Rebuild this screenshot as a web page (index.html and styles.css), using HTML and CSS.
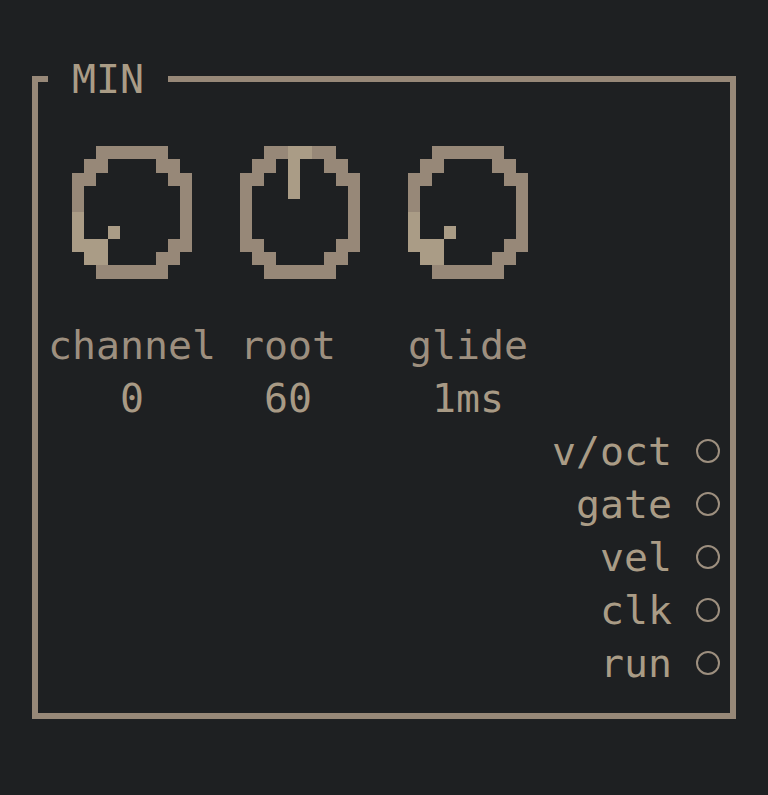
FILE: index.html
```html
<!DOCTYPE html>
<html lang="en">
<head>
<meta charset="utf-8">
<title>MIN</title>
<link rel="stylesheet" href="styles.css">
</head>
<body>
<fieldset class="panel">
  <legend class="title"> MIN </legend>
  <div class="knobs">
    <div class="knob-col">
      <svg class="knob" viewBox="0 0 10 10" preserveAspectRatio="none">
        <path class="ring" d="M2 0h6v1h-6z M1 1h2v1h-2z M7 1h2v1h-2z M0 2h2v1h-2z M8 2h2v1h-2z M0 3h1v4h-1z M9 3h1v4h-1z M0 7h2v1h-2z M8 7h2v1h-2z M1 8h2v1h-2z M7 8h2v1h-2z M2 9h6v1h-6z"/>
        <path class="hi" d="M0 5h1v3h-1z M1 7h2v2h-2z M3 6h1v1h-1z"/>
      </svg>
      <div class="label">channel</div>
      <div class="value">0</div>
    </div>
    <div class="knob-col">
      <svg class="knob" viewBox="0 0 10 10" preserveAspectRatio="none">
        <path class="ring" d="M2 0h6v1h-6z M1 1h2v1h-2z M7 1h2v1h-2z M0 2h2v1h-2z M8 2h2v1h-2z M0 3h1v4h-1z M9 3h1v4h-1z M0 7h2v1h-2z M8 7h2v1h-2z M1 8h2v1h-2z M7 8h2v1h-2z M2 9h6v1h-6z"/>
        <path class="hi" d="M4 0h2v1h-2z M4 1h1v3h-1z"/>
      </svg>
      <div class="label even">root</div>
      <div class="value even">60</div>
    </div>
    <div class="knob-col">
      <svg class="knob" viewBox="0 0 10 10" preserveAspectRatio="none">
        <path class="ring" d="M2 0h6v1h-6z M1 1h2v1h-2z M7 1h2v1h-2z M0 2h2v1h-2z M8 2h2v1h-2z M0 3h1v4h-1z M9 3h1v4h-1z M0 7h2v1h-2z M8 7h2v1h-2z M1 8h2v1h-2z M7 8h2v1h-2z M2 9h6v1h-6z"/>
        <path class="hi" d="M0 5h1v3h-1z M1 7h2v2h-2z M3 6h1v1h-1z"/>
      </svg>
      <div class="label">glide</div>
      <div class="value">1ms</div>
    </div>
  </div>
  <ul class="ports">
    <li class="port"><span class="port-name">v/oct</span><span class="jack"></span></li>
    <li class="port"><span class="port-name">gate</span><span class="jack"></span></li>
    <li class="port"><span class="port-name">vel</span><span class="jack"></span></li>
    <li class="port"><span class="port-name">clk</span><span class="jack"></span></li>
    <li class="port"><span class="port-name">run</span><span class="jack"></span></li>
  </ul>
</fieldset>
</body>
</html>
```
FILE: styles.css
```css
html, body {
  margin: 0;
  padding: 0;
}

body {
  background: #1e2022;
  width: 768px;
  height: 795px;
  overflow: hidden;
  font-family: "DejaVu Sans Mono", "Liberation Mono", monospace;
  font-size: 39.87px;
  line-height: 53px;
  color: #9d8f7f;
}

.panel {
  box-sizing: border-box;
  margin: 52px 0 0 32px;
  padding: 0;
  width: 704px;
  height: 667px;
  min-width: 0;
  border: 6px solid #978878;
}

.title {
  margin-left: 10px;
  padding: 0;
  width: 120px;
  line-height: 54px;
  white-space: pre;
  color: #aa9c86;
}

.knobs {
  display: flex;
  gap: 48px;
  margin-top: 40px;
  padding-left: 34px;
}

.knob-col {
  width: 120px;
  display: flex;
  flex-direction: column;
  align-items: center;
}

.knob {
  display: block;
  width: 120px;
  height: 132.5px;
  shape-rendering: crispEdges;
}

.ring {
  fill: #978878;
}

.hi {
  fill: #aa9c86;
}

.label {
  margin-top: 40px;
  white-space: nowrap;
}

.value {
  white-space: nowrap;
  color: #a89a85;
}

.even {
  padding-right: 24px;
}

.ports {
  list-style: none;
  margin: 0 10px 0 0;
  padding: 0;
  display: flex;
  flex-direction: column;
  align-items: flex-end;
}

.port {
  display: flex;
  align-items: center;
  gap: 24px;
  height: 53px;
}

.port-name {
  color: #aa9c86;
}

.jack {
  box-sizing: border-box;
  width: 24px;
  height: 24px;
  border: 2px solid #9d8f7f;
  border-radius: 50%;
}
```
